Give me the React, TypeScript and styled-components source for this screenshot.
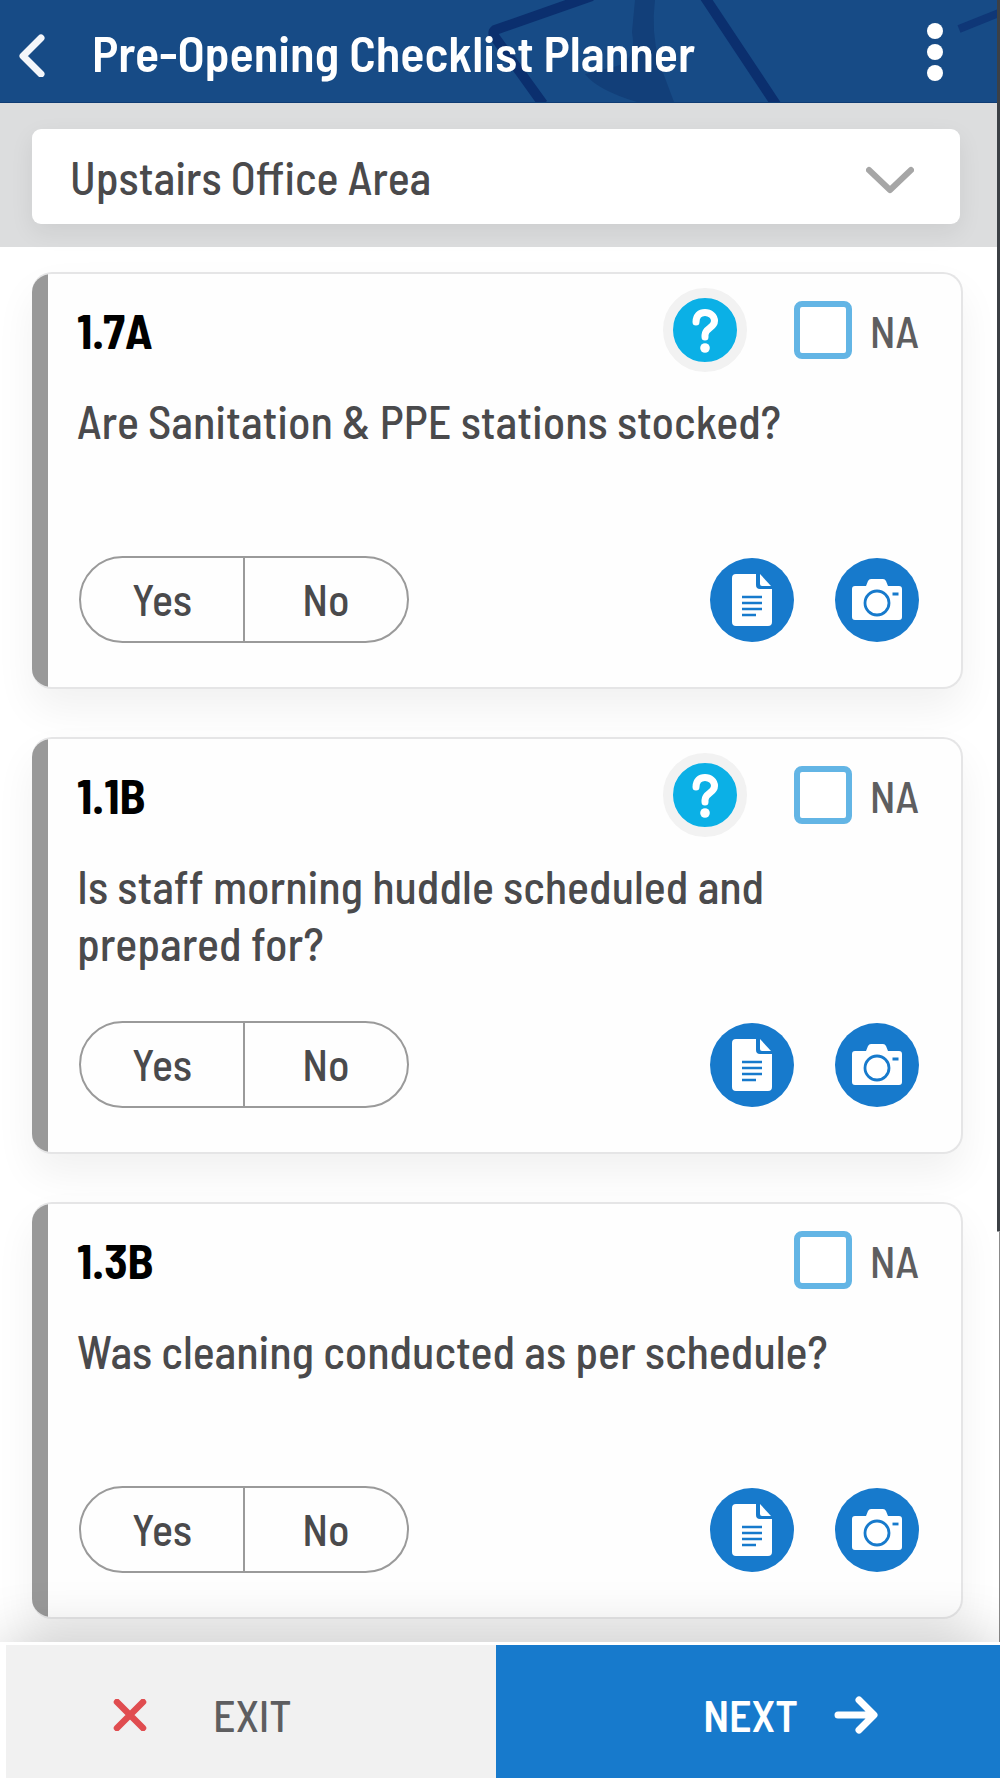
import React, { useId, useState } from "react";
import styled, { createGlobalStyle } from "styled-components";

const FONT =
  '"Barlow Semi Condensed", "Roboto Condensed", "Liberation Sans Narrow", Roboto, "Liberation Sans", sans-serif';

const GlobalStyle = createGlobalStyle`
  *, *::before, *::after { box-sizing: border-box; }
  body { margin: 0; background: #fff; font-family: ${FONT}; font-weight: 500; color: #4a4a4c; }
  button, select, input { font: inherit; color: inherit; }
  button { cursor: pointer; border: 0; padding: 0; background: none; }
`;

const Page = styled.div`
  min-height: 100vh;
  display: flex;
  flex-direction: column;
`;

const Screen = styled.div`
  flex: 1;
  display: flex;
  flex-direction: column;
  padding-right: 3px;
  background:
    linear-gradient(#3c4045, #3c4045) right top / 3px 75% no-repeat,
    linear-gradient(#8a8a8a, #8a8a8a) right bottom / 1px 25% no-repeat,
    #fff;
`;

const Header = styled.header`
  position: relative;
  display: flex;
  align-items: center;
  height: 103px;
  padding: 2px 54px 0 18px;
  background: #174b86;
  border-bottom: 1px solid #0f3c74;
  color: #fff;
`;

const HeaderArt = styled.svg`
  position: absolute;
  inset: 0 0 0 auto;
  height: 100%;
`;

const IconButton = styled.button`
  position: relative;
  display: flex;
  align-items: center;
  justify-content: center;
`;

const Title = styled.h1`
  position: relative;
  flex: 1;
  margin: 0 0 0 46px;
  font-size: 50px;
  line-height: 56px;
  font-weight: 600;
  white-space: nowrap;
`;

const AreaBar = styled.div`
  padding: 26px 37px 23px 32px;
  background: #dcddde;
`;

const AreaField = styled.div`
  position: relative;
`;

const AreaSelect = styled.select`
  display: block;
  width: 100%;
  height: 95px;
  padding: 0 100px 0 38px;
  appearance: none;
  border: 0;
  border-radius: 9px;
  background: #fff;
  box-shadow: 0 8px 24px rgba(0, 0, 0, 0.07);
  font-size: 46px;
`;

const AreaChevron = styled.svg`
  position: absolute;
  right: 46px;
  top: 36px;
  pointer-events: none;
`;

const List = styled.main`
  flex: 1;
  display: flex;
  flex-direction: column;
  gap: 48px;
  padding: 25px 34px 23px 32px;
`;

const Card = styled.section`
  display: flex;
  min-height: 417px;
  border: 2px solid #e5e5e6;
  border-left: 0;
  border-radius: 20px;
  overflow: hidden;
  background: #fefefe;
  box-shadow: 0 20px 40px rgba(0, 0, 0, 0.06);
`;

const Stripe = styled.div`
  flex: none;
  width: 16px;
  background: #999;
`;

const CardBody = styled.div`
  flex: 1;
  display: flex;
  flex-direction: column;
  padding: 14px 42px 44px 29px;
`;

const CardHead = styled.div`
  display: flex;
  align-items: center;
  min-height: 84px;
`;

const Code = styled.h2`
  flex: 1;
  margin: 0;
  font-size: 48px;
  line-height: 56px;
  font-weight: 700;
  color: #000;
`;

const HelpButton = styled.button`
  width: 84px;
  height: 84px;
  margin-right: 47px;
  border: 10px solid #f2f2f2;
  border-radius: 50%;
  background: #0bb0e6;
  display: flex;
  align-items: center;
  justify-content: center;
`;

const NaLabel = styled.label`
  display: flex;
  align-items: center;
  gap: 18px;
  font-size: 44px;
  line-height: 57px;
  color: #5e5e60;
`;

const NaBox = styled.input`
  appearance: none;
  width: 58px;
  height: 58px;
  margin: 0;
  border: 6px solid #63b5e5;
  border-radius: 8px;
  background: #fff;
  &:checked {
    background: #63b5e5;
  }
`;

const Question = styled.p`
  margin: 20px 0 0;
  font-size: 46px;
  line-height: 57px;
`;

const Actions = styled.div`
  display: flex;
  align-items: center;
  gap: 41px;
  margin-top: auto;
`;

const Answers = styled.div`
  display: flex;
  width: 330px;
  height: 87px;
  margin: 0 auto 0 2px;
  border: 2px solid #9a9a9a;
  border-radius: 44px;
  overflow: hidden;
`;

const Answer = styled.button<{ $selected: boolean }>`
  flex: 1;
  padding-bottom: 2px;
  font-size: 44px;
  background: ${(p) => (p.$selected ? "#e3f1fb" : "transparent")};
  & + & {
    border-left: 2px solid #9a9a9a;
  }
`;

const RoundButton = styled.button`
  width: 84px;
  height: 84px;
  border-radius: 50%;
  background: #177acc;
  display: flex;
  align-items: center;
  justify-content: center;
`;

const Footer = styled.footer`
  position: sticky;
  bottom: 0;
  display: flex;
  height: 136px;
  padding-left: 6px;
  border-top: 3px solid #fff;
  background: #fff;
  box-shadow: 0 0 60px rgba(0, 0, 0, 0.22);
`;

const FooterButton = styled.button<{ $primary?: boolean }>`
  flex: 1;
  display: flex;
  align-items: center;
  padding: ${(p) => (p.$primary ? "6px 122px 0 0" : "6px 0 0 107px")};
  justify-content: ${(p) => (p.$primary ? "flex-end" : "flex-start")};
  gap: ${(p) => (p.$primary ? "36px" : "66px")};
  font-size: 44px;
  font-weight: ${(p) => (p.$primary ? 600 : 500)};
  background: ${(p) => (p.$primary ? "#177acc" : "#f1f1f1")};
  color: ${(p) => (p.$primary ? "#fff" : "#5e5e60")};
`;

const HelpIcon = () => (
  <svg width="30" height="46" viewBox="0 0 30 46" fill="none" aria-hidden="true">
    <path d="M6 15C6 8.500 10 5.500 15 5.500S24.500 9 24.500 14C24.500 21 15 21 15 28V30" stroke="#fff" strokeWidth="7" strokeLinecap="round" />
    <circle cx="15" cy="41" r="4.800" fill="#fff" />
  </svg>
);

const NoteIcon = () => (
  <svg width="40" height="52" viewBox="0 0 40 52" aria-hidden="true">
    <path d="M4 0H24V11Q24 15 28 15H40V48Q40 52 36 52H4Q0 52 0 48V4Q0 0 4 0Z" fill="#fff" />
    <path d="M28 0L39 12H30Q28 12 28 10Z" fill="#fff" />
    <path d="M10 23H30M10 29H30M10 35H30M10 41H24" stroke="#177acc" strokeWidth="2.500" />
  </svg>
);

const CameraIcon = () => (
  <svg width="50" height="42" viewBox="0 0 50 42" aria-hidden="true">
    <path d="M3 7H14L16 2Q17 0 19 0H31Q33 0 34 2L36 7H47Q50 7 50 10V38Q50 41 47 41H3Q0 41 0 38V10Q0 7 3 7Z" fill="#fff" />
    <circle cx="25" cy="24" r="12" fill="none" stroke="#177acc" strokeWidth="2.800" />
    <path d="M40.500 15H46.500" stroke="#177acc" strokeWidth="2.800" />
  </svg>
);

type Item = { code: string; question: string; help: boolean };

const ITEMS: Item[] = [
  { code: "1.7A", question: "Are Sanitation & PPE stations stocked?", help: true },
  { code: "1.1B", question: "Is staff morning huddle scheduled and prepared for?", help: true },
  { code: "1.3B", question: "Was cleaning conducted as per schedule?", help: false },
];

function ChecklistCard({ code, question, help }: Item) {
  const [answer, setAnswer] = useState<string | null>(null);
  const naId = useId();
  return (
    <Card>
      <Stripe />
      <CardBody>
        <CardHead>
          <Code>{code}</Code>
          {help && (
            <HelpButton type="button" aria-label="Help">
              <HelpIcon />
            </HelpButton>
          )}
          <NaLabel htmlFor={naId}>
            <NaBox id={naId} type="checkbox" />
            NA
          </NaLabel>
        </CardHead>
        <Question>{question}</Question>
        <Actions>
          <Answers role="group" aria-label={question}>
            {["Yes", "No"].map((a) => (
              <Answer key={a} type="button" $selected={answer === a} aria-pressed={answer === a} onClick={() => setAnswer(a)}>
                {a}
              </Answer>
            ))}
          </Answers>
          <RoundButton type="button" aria-label="Add note">
            <NoteIcon />
          </RoundButton>
          <RoundButton type="button" aria-label="Add photo">
            <CameraIcon />
          </RoundButton>
        </Actions>
      </CardBody>
    </Card>
  );
}

export default function App() {
  return (
    <>
      <GlobalStyle />
      <Page>
        <Screen>
          <Header>
            <HeaderArt viewBox="0 0 520 102" aria-hidden="true">
              <path d="M158 0H178Q174 30 182 62L197 102H160Q120 90 108 74L140 66Q160 60 155 32Z" fill="#123f79" />
              <path d="M115 -4L18 30Q14 33 20 40L66 104M227 -4L300 106" stroke="#0b2f6e" strokeWidth="10" fill="none" />
              <path d="M482 29L522 13" stroke="#0f3777" strokeWidth="8" />
            </HeaderArt>
            <IconButton type="button" aria-label="Back">
              <svg width="28" height="50" viewBox="0 0 28 50" fill="none" aria-hidden="true">
                <path d="M23 11L5 29L23 47" stroke="#f4f6fa" strokeWidth="7" strokeLinecap="round" strokeLinejoin="round" />
              </svg>
            </IconButton>
            <Title>Pre-Opening Checklist Planner</Title>
            <IconButton type="button" aria-label="More options">
              <svg width="16" height="58" viewBox="0 0 16 58" fill="#fff" aria-hidden="true">
                <circle cx="8" cy="8" r="8" />
                <circle cx="8" cy="29" r="8" />
                <circle cx="8" cy="50" r="8" />
              </svg>
            </IconButton>
          </Header>
          <AreaBar>
            <AreaField>
              <AreaSelect aria-label="Area" defaultValue="office">
                <option value="office">Upstairs Office Area</option>
              </AreaSelect>
              <AreaChevron width="48" height="30" viewBox="0 0 48 30" fill="none" aria-hidden="true">
                <path d="M3 5L24 25L45 5" stroke="#a6a6a6" strokeWidth="6" strokeLinecap="round" strokeLinejoin="round" />
              </AreaChevron>
            </AreaField>
          </AreaBar>
          <List>
            {ITEMS.map((item) => (
              <ChecklistCard key={item.code} {...item} />
            ))}
          </List>
        </Screen>
        <Footer>
          <FooterButton type="button">
            <svg width="34" height="32" viewBox="0 0 34 32" fill="none" aria-hidden="true">
              <path d="M4 3L30 29M30 3L4 29" stroke="#e04d50" strokeWidth="6.500" strokeLinecap="round" />
            </svg>
            EXIT
          </FooterButton>
          <FooterButton type="button" $primary>
            NEXT
            <svg width="44" height="38" viewBox="0 0 44 38" fill="none" aria-hidden="true">
              <path d="M4 19H39M25 4L40 19L25 34" stroke="#fff" strokeWidth="7" strokeLinecap="round" strokeLinejoin="round" />
            </svg>
          </FooterButton>
        </Footer>
      </Page>
    </>
  );
}
